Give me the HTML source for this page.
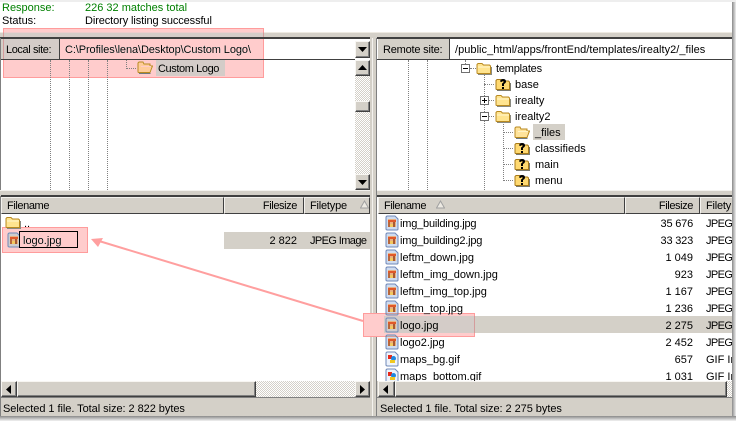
<!DOCTYPE html>
<html><head><meta charset="utf-8"><style>
html,body{margin:0;padding:0;width:736px;height:421px;overflow:hidden;background:#fff}
body{position:relative;font:11px/13px "Liberation Sans",sans-serif;color:#000}
div,span,svg{position:absolute;box-sizing:border-box}
span{white-space:nowrap;margin-top:1px}
.g{background:#d4d0c8}
.btn{background:#d4d0c8;border:1px solid;border-color:#f8f6f2 #404040 #404040 #f8f6f2;box-shadow:inset -1px -1px 0 #808080}
.chk{background:repeating-conic-gradient(#fff 0 25%,#d4d0c8 0 50%) 0 0/2px 2px}
.h{background:#d4d0c8;height:17px;top:197px;border:1px solid;border-color:#f4f2ee #404040 #404040 #f4f2ee}
.v{border-left:1px dotted #808080;width:1px}
.hl{border-top:1px dotted #808080;height:1px}
.r{text-align:right}
.n{letter-spacing:-.4px}
.p{letter-spacing:-.6px}
.s{letter-spacing:-.2px}
.box{background:#ffcccc;mix-blend-mode:darken;border:1px solid #ff9c9c}
</style></head><body>
<svg width="0" height="0" style="left:0;top:0"><defs>
<symbol id="f" viewBox="0 0 16 13"><path d="M1 11V2.500L2 1.500H6L7.500 3H13.500L14.500 4V11.500H1.500Z" fill="#ffe48f" stroke="#b98a20"/><path d="M2 5H14" stroke="#fff6cf"/><path d="M2 12.500H15.500V5" fill="none" stroke="#8a8a80"/></symbol>
<symbol id="o" viewBox="0 0 16 13"><path d="M1 11V2L2 1H6L7 3H13V5H15.500L13 11.500H1.500Z" fill="#ffe39a" stroke="#b98a20"/><path d="M4 5.500H14" stroke="#fff4c8"/><path d="M2 12.500H13.500" stroke="#6f7a80"/></symbol>
<symbol id="q" viewBox="0 0 16 13"><path d="M1 11V2.500L2 1.500H6L7.500 3H13.500L14.500 4V11.500H1.500Z" fill="#ffd970" stroke="#a87a18"/><path d="M2 12.500H15.500V5" fill="none" stroke="#7a7a70"/><path d="M5 3.500Q5.500 1 8 1Q11 1 11 3.500Q11 5 9 6V8H7V5.500Q9 4.500 8.500 3.300Q7.500 2.500 7 4Z" fill="#000"/><rect x="7" y="9" width="2" height="2"/></symbol>
<symbol id="j" viewBox="0 0 14 16"><path d="M1 2.500Q1 1 2.500 1H10L13 4V14Q13 15 12 15H2.500Q1 15 1 14Z" fill="#cfdcf0" stroke="#6f88b8"/><rect x="3" y="4" width="8" height="8" fill="#eab080"/><rect x="3" y="5" width="8" height="2" fill="#e0582a"/><rect x="3" y="7" width="2" height="5" fill="#b8683c"/><rect x="8" y="7" width="2" height="5" fill="#a85a34"/><rect x="5" y="9" width="3" height="3" fill="#f2c860"/></symbol>
<symbol id="i" viewBox="0 0 14 16"><path d="M1 2.500Q1 1 2.500 1H10L13 4V14Q13 15 12 15H2.500Q1 15 1 14Z" fill="#eef3fb" stroke="#6f88b8"/><rect x="3" y="4" width="4" height="4" fill="#e82818"/><circle cx="8.500" cy="7.500" r="2.500" fill="#2088e0"/><rect x="5" y="9" width="5" height="3" fill="#f0c820"/></symbol>
</defs></svg>

<!-- window chrome -->
<div style="left:0;top:0;width:736px;height:2px;background:#eee"></div>
<span style="left:2px;top:1px;color:#008000">Response:</span>
<span style="left:85px;top:1px;color:#008000">226 32 matches total</span>
<span style="left:2px;top:14px">Status:</span>
<span style="left:85px;top:14px;letter-spacing:-.1px">Directory listing successful</span>
<div class="g" style="left:0;top:32px;width:732px;height:6px;border-top:1px solid #eeeae2"></div>
<div style="left:0;top:37px;width:370px;height:2px;background:#404040"></div>
<div style="left:377px;top:37px;width:355px;height:2px;background:#404040"></div>
<div style="left:0;top:38px;width:1px;height:378px;background:#808080"></div>
<div class="g" style="left:370px;top:38px;width:7px;height:378px"></div>
<div style="left:376px;top:38px;width:1px;height:378px;background:#808080"></div>
<div style="left:372px;top:38px;width:1px;height:378px;background:#f4f2ee"></div>

<!-- local site -->
<div class="g" style="left:1px;top:39px;width:59px;height:20px;border-right:1px solid #404040"></div>
<span class="n" style="left:6px;top:43px">Local site:</span>
<span style="left:65px;top:43px;letter-spacing:-.1px">C:\Profiles\lena\Desktop\Custom Logo\</span>
<div style="left:1px;top:59px;width:354px;height:1px;background:#404040"></div>
<div class="btn" style="left:355px;top:41px;width:15px;height:17px"></div>
<svg style="left:358px;top:47px" width="9" height="5"><path d="M0 0H9L4.500 5Z"/></svg>

<!-- local tree -->
<div class="v" style="left:50px;top:60px;height:130px"></div>
<div class="v" style="left:69px;top:60px;height:130px"></div>
<div class="v" style="left:88px;top:60px;height:130px"></div>
<div class="v" style="left:107px;top:60px;height:130px"></div>
<div class="v" style="left:126px;top:60px;height:9px"></div>
<div class="hl" style="left:126px;top:68px;width:10px"></div>
<svg style="left:137px;top:61px" width="16" height="13"><use href="#o"/></svg>
<div class="g" style="left:156px;top:60px;width:69px;height:16px"></div>
<span class="n" style="left:158px;top:62px">Custom Logo</span>

<!-- local tree scrollbar -->
<div class="chk" style="left:355px;top:60px;width:15px;height:130px"></div>
<div class="btn" style="left:355px;top:60px;width:15px;height:16px"></div>
<svg style="left:358px;top:65px" width="9" height="5"><path d="M0 5H9L4.500 0Z"/></svg>
<div class="btn" style="left:355px;top:101px;width:15px;height:11px"></div>
<div class="btn" style="left:355px;top:174px;width:15px;height:16px"></div>
<svg style="left:358px;top:180px" width="9" height="5"><path d="M0 0H9L4.500 5Z"/></svg>

<!-- remote site -->
<div class="g" style="left:378px;top:39px;width:72px;height:20px;border-right:1px solid #404040"></div>
<span class="s" style="left:383px;top:43px">Remote site:</span>
<span style="left:455px;top:43px;letter-spacing:.04px">/public_html/apps/frontEnd/templates/irealty2/_files</span>
<div style="left:377px;top:59px;width:355px;height:1px;background:#404040"></div>

<!-- remote tree -->
<div class="v" style="left:408px;top:60px;height:130px"></div>
<div class="v" style="left:427px;top:60px;height:130px"></div>
<div class="v" style="left:465px;top:60px;height:4px"></div>
<div class="v" style="left:484px;top:73px;height:117px"></div>
<div class="v" style="left:503px;top:121px;height:60px"></div>
<div class="hl" style="left:470px;top:68px;width:6px"></div>
<div class="hl" style="left:484px;top:84px;width:10px"></div>
<div class="hl" style="left:489px;top:100px;width:5px"></div>
<div class="hl" style="left:489px;top:116px;width:5px"></div>
<div class="hl" style="left:503px;top:132px;width:10px"></div>
<div class="hl" style="left:503px;top:148px;width:10px"></div>
<div class="hl" style="left:503px;top:164px;width:10px"></div>
<div class="hl" style="left:503px;top:180px;width:10px"></div>
<svg style="left:461px;top:64px;background:#fff" width="9" height="9"><path d="M.5.5H8.500V8.500H.5Z" fill="none" stroke="#707070"/><path d="M2 4.500H7" stroke="#000"/></svg>
<svg style="left:480px;top:96px;background:#fff" width="9" height="9"><path d="M.5.5H8.500V8.500H.5Z" fill="none" stroke="#707070"/><path d="M2 4.500H7M4.500 2V7" stroke="#000"/></svg>
<svg style="left:480px;top:112px;background:#fff" width="9" height="9"><path d="M.5.5H8.500V8.500H.5Z" fill="none" stroke="#707070"/><path d="M2 4.500H7" stroke="#000"/></svg>
<svg style="left:476px;top:62px" width="16" height="13"><use href="#f"/></svg>
<svg style="left:495px;top:78px" width="16" height="13"><use href="#q"/></svg>
<svg style="left:495px;top:94px" width="16" height="13"><use href="#f"/></svg>
<svg style="left:495px;top:110px" width="16" height="13"><use href="#f"/></svg>
<svg style="left:514px;top:126px" width="16" height="13"><use href="#o"/></svg>
<svg style="left:514px;top:142px" width="16" height="13"><use href="#q"/></svg>
<svg style="left:514px;top:158px" width="16" height="13"><use href="#q"/></svg>
<svg style="left:514px;top:174px" width="16" height="13"><use href="#q"/></svg>
<span class="s" style="left:496px;top:62px">templates</span>
<span style="left:515px;top:78px">base</span>
<span style="left:515px;top:94px">irealty</span>
<span style="left:515px;top:110px">irealty2</span>
<div class="g" style="left:533px;top:124px;width:32px;height:16px"></div>
<span style="left:535px;top:126px">_files</span>
<span style="left:535px;top:142px">classifieds</span>
<span style="left:535px;top:158px">main</span>
<span style="left:535px;top:174px">menu</span>

<!-- divider -->
<div class="g" style="left:0;top:190px;width:370px;height:6px;border-top:1px solid #f4f2ee"></div>
<div class="g" style="left:377px;top:190px;width:355px;height:6px;border-top:1px solid #f4f2ee"></div>
<div style="left:1px;top:195px;width:369px;height:2px;background:#404040"></div>
<div style="left:377px;top:195px;width:355px;height:2px;background:#404040"></div>

<!-- local list -->
<div class="h" style="left:1px;width:223px"></div>
<div class="h" style="left:224px;width:80px"></div>
<div class="h" style="left:304px;width:66px"></div>
<span class="n" style="left:7px;top:199px">Filename</span>
<span class="n r" style="left:240px;width:57px;top:199px">Filesize</span>
<span class="s" style="left:310px;top:199px">Filetype</span>
<svg style="left:360px;top:200px" width="9" height="9"><path d="M4.500 1L8.500 8H.5Z" fill="#ece9e2" stroke="#a0a0a0"/></svg>
<svg style="left:5px;top:216px" width="16" height="13"><use href="#f"/></svg>
<span style="left:24px;top:217px">..</span>
<div class="g" style="left:224px;top:232px;width:146px;height:17px"></div>
<span class="r" style="left:240px;width:57px;top:234px">2 822</span>
<span class="p" style="left:310px;top:234px">JPEG Image</span>
<svg style="left:7px;top:232px" width="14" height="16"><use href="#j"/></svg>
<div style="left:19px;top:231px;width:59px;height:17px;border:1px solid #000;background:#fff"></div>
<span style="left:23px;top:234px">logo.jpg</span>

<!-- remote list -->
<div class="h" style="left:378px;width:247px"></div>
<div class="h" style="left:625px;width:75px"></div>
<div class="h" style="left:700px;width:32px;border-right:0"></div>
<span class="n" style="left:384px;top:199px">Filename</span>
<svg style="left:436px;top:200px" width="9" height="9"><path d="M4.500 1L8.500 8H.5Z" fill="#ece9e2" stroke="#a0a0a0"/></svg>
<span class="n r" style="left:630px;width:63px;top:199px">Filesize</span>
<span class="s" style="left:706px;top:199px;width:25px;overflow:hidden">Filetype</span>

<div style="left:377px;top:214px;width:355px;height:167px;overflow:hidden">
<div class="g" style="left:4px;top:102px;width:351px;height:17px"></div>
<svg style="left:8px;top:1px" width="14" height="16"><use href="#j"/></svg><span class="s" style="left:23px;top:3px">img_building.jpg</span><span class="r s" style="left:240px;width:76px;top:3px">35 676</span><span class="p" style="left:329px;top:3px">JPEG</span>
<svg style="left:8px;top:18px" width="14" height="16"><use href="#j"/></svg><span class="s" style="left:23px;top:20px">img_building2.jpg</span><span class="r s" style="left:240px;width:76px;top:20px">33 323</span><span class="p" style="left:329px;top:20px">JPEG</span>
<svg style="left:8px;top:35px" width="14" height="16"><use href="#j"/></svg><span style="left:23px;top:37px">leftm_down.jpg</span><span class="r" style="left:240px;width:76px;top:37px">1 049</span><span class="p" style="left:329px;top:37px">JPEG</span>
<svg style="left:8px;top:52px" width="14" height="16"><use href="#j"/></svg><span style="left:23px;top:54px">leftm_img_down.jpg</span><span class="r" style="left:240px;width:76px;top:54px">923</span><span class="p" style="left:329px;top:54px">JPEG</span>
<svg style="left:8px;top:69px" width="14" height="16"><use href="#j"/></svg><span style="left:23px;top:71px">leftm_img_top.jpg</span><span class="r" style="left:240px;width:76px;top:71px">1 167</span><span class="p" style="left:329px;top:71px">JPEG</span>
<svg style="left:8px;top:86px" width="14" height="16"><use href="#j"/></svg><span style="left:23px;top:88px">leftm_top.jpg</span><span class="r" style="left:240px;width:76px;top:88px">1 236</span><span class="p" style="left:329px;top:88px">JPEG</span>
<svg style="left:8px;top:103px" width="14" height="16"><use href="#j"/></svg><span style="left:23px;top:105px">logo.jpg</span><span class="r" style="left:240px;width:76px;top:105px">2 275</span><span class="p" style="left:329px;top:105px">JPEG</span>
<svg style="left:8px;top:120px" width="14" height="16"><use href="#j"/></svg><span style="left:23px;top:122px">logo2.jpg</span><span class="r" style="left:240px;width:76px;top:122px">2 452</span><span class="p" style="left:329px;top:122px">JPEG</span>
<svg style="left:8px;top:137px" width="14" height="16"><use href="#i"/></svg><span style="left:23px;top:139px">maps_bg.gif</span><span class="r" style="left:240px;width:76px;top:139px">657</span><span style="left:329px;top:139px;width:26px;overflow:hidden">GIF Image</span>
<svg style="left:8px;top:154px" width="14" height="16"><use href="#i"/></svg><span style="left:23px;top:156px">maps_bottom.gif</span><span class="r" style="left:240px;width:76px;top:156px">1 031</span><span style="left:329px;top:156px;width:26px;overflow:hidden">GIF Image</span>
</div>

<!-- horizontal scrollbars -->
<div class="chk" style="left:1px;top:381px;width:369px;height:16px"></div>
<div class="btn" style="left:1px;top:381px;width:16px;height:16px"></div>
<svg style="left:6px;top:385px" width="5" height="9"><path d="M5 0V9L0 4.500Z"/></svg>
<div class="btn" style="left:17px;top:381px;width:239px;height:16px"></div>
<div class="btn" style="left:355px;top:381px;width:15px;height:16px"></div>
<svg style="left:360px;top:385px" width="5" height="9"><path d="M0 0V9L5 4.500Z"/></svg>

<div class="g" style="left:377px;top:381px;width:355px;height:16px"></div>
<div class="btn" style="left:378px;top:381px;width:17px;height:16px"></div>
<svg style="left:383px;top:385px" width="5" height="9"><path d="M5 0V9L0 4.500Z"/></svg>
<div class="btn" style="left:395px;top:381px;width:332px;height:16px"></div>
<div class="chk" style="left:727px;top:381px;width:5px;height:16px"></div>

<!-- status bars -->
<div class="g" style="left:1px;top:397px;width:369px;height:19px;border-top:1px solid #808080"></div>
<span style="left:3px;top:402px;letter-spacing:-.05px">Selected 1 file. Total size: 2 822 bytes</span>
<div class="g" style="left:377px;top:397px;width:355px;height:19px;border-top:1px solid #808080"></div>
<span style="left:380px;top:402px;letter-spacing:-.05px">Selected 1 file. Total size: 2 275 bytes</span>

<!-- window shadow -->
<div style="left:732px;top:2px;width:4px;height:419px;background:linear-gradient(90deg,#8a8a8a,#eee)"></div>
<div style="left:0;top:416px;width:736px;height:5px;background:linear-gradient(#8a8a8a,#f2f2f2)"></div>

<!-- annotations -->
<div style="left:363px;top:313px;width:21px;height:24px;background:#ffcccc"></div>
<div class="box" style="left:3px;top:28px;width:261px;height:50px"></div>
<div class="box" style="left:2px;top:227px;width:86px;height:26px"></div>
<div class="box" style="left:363px;top:313px;width:112px;height:24px"></div>
<svg style="left:85px;top:232px" width="285" height="95"><path d="M278 89L14 9" stroke="#ff9f9f" stroke-width="2" fill="none"/><path d="M6 7L18 6L13 15Z" fill="#ff9f9f"/></svg>
</body></html>
